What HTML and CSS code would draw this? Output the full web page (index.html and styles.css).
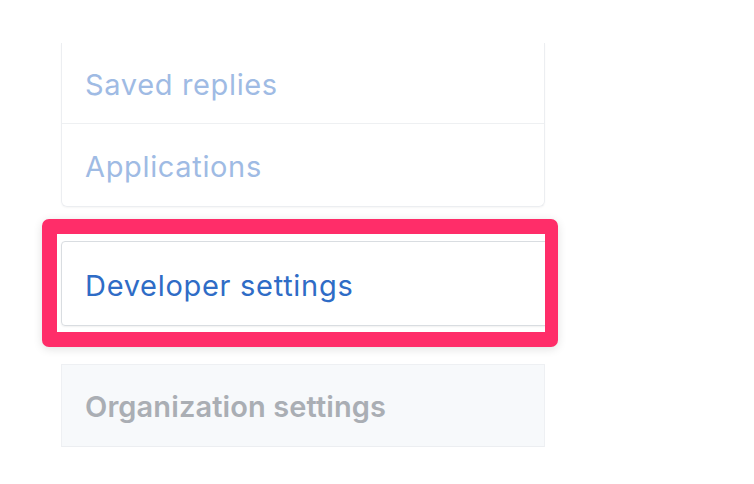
FILE: index.html
```html
<!DOCTYPE html>
<html>
<head>
<meta charset="utf-8">
<link rel="stylesheet" href="styles.css">
</head>
<body>
<div class="wrap">
  <nav class="menu">
    <a class="menu-item first">Saved replies</a>
    <a class="menu-item">Applications</a>
  </nav>
  <div class="highlight">
    <div class="dev-card">
      <a class="dev-item">Developer settings</a>
    </div>
  </div>
  <div class="org-card">
    <div class="org-head">Organization settings</div>
  </div>
</div>
</body>
</html>
```

FILE: styles.css
```css
html, body {
  margin: 0;
  padding: 0;
  background: #ffffff;
}

body {
  font-family: Inter, "Liberation Sans", Arial, sans-serif;
  width: 754px;
  height: 484px;
  overflow: hidden;
}

.wrap {
  display: flex;
  flex-direction: column;
  padding: 43px 0 0 61px;
  width: 484px;
}

.menu {
  display: flex;
  flex-direction: column;
  border: 1px solid #eceef1;
  border-top: none;
  border-radius: 0 0 6px 6px;
  box-shadow: 0 1px 2px rgba(0, 0, 0, 0.04);
}

.menu-item {
  display: flex;
  align-items: center;
  height: 82px;
  padding: 3px 0 0 23px;
  box-sizing: border-box;
  font-size: 29px;
  color: #9fbbe4;
  letter-spacing: 0.65px;
}

.menu-item.first {
  height: 81px;
  border-bottom: 1px solid #eef0f2;
}

.highlight {
  margin: 12px 0 0 -19px;
  width: 516px;
  box-sizing: border-box;
  border-style: solid;
  border-color: #ff2d69;
  border-width: 15px 13px 15px 15px;
  border-radius: 7px;
  padding: 7px 0 6px 4px;
  background: #ffffff;
  overflow: hidden;
  box-shadow: 0 2px 10px rgba(0, 0, 0, 0.12);
}

.dev-card {
  width: 500px;
  height: 85px;
  box-sizing: border-box;
  border: 1px solid #d9dde1;
  border-radius: 4px;
  display: flex;
  align-items: center;
  box-shadow: 0 1px 2px rgba(0, 0, 0, 0.06);
}

.dev-item {
  padding: 3px 0 0 23px;
  font-size: 29px;
  color: #2f6cc6;
  letter-spacing: 0.7px;
}

.org-card {
  margin-top: 17px;
  height: 83px;
  box-sizing: border-box;
  background: #f7f9fb;
  border: 1px solid #eef0f3;
  border-bottom-color: #eceef1;
  display: flex;
  align-items: center;
}

.org-head {
  padding: 1px 0 0 23px;
  font-size: 29px;
  font-weight: 600;
  color: #aaaeb4;
  letter-spacing: 0.1px;
}
```
